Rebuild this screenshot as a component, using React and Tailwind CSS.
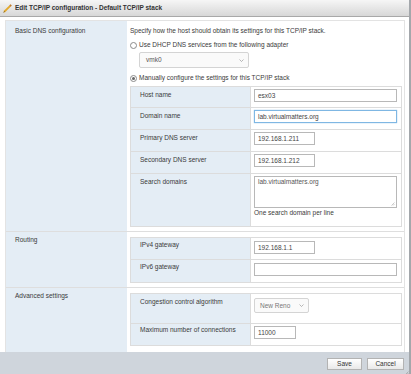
import React from "react";

const Row = ({ label, h, lpt = "pt-[4px]", children }) => (
  <div className={`grid grid-cols-[120px_1fr] border-b border-[#dcdcdc] last:border-b-0 ${h}`}>
    <div className={`bg-[#e4edf5] pl-[9px] ${lpt} border-r border-[#dcdcdc]`}>{label}</div>
    <div className="pl-[3px] pt-[2px]">{children}</div>
  </div>
);

const Input = ({ value, w = "w-[143px]", focus }) => (
  <div
    className={`flex h-[13px] items-center border px-[3px] ${w} ${
      focus ? "border-[#7fb7e3] shadow-[0_0_1px_#7fb7e3]" : "border-[#b8b8b8]"
    } bg-white text-[#444]`}
  >
    {value}
  </div>
);

const Chevron = () => (
  <svg width="5" height="3" viewBox="0 0 5 3" className="text-[#8a8a8a]">
    <path d="M0.5 0.5 L2.5 2.5 L4.5 0.5" fill="none" stroke="currentColor" strokeWidth="0.6" />
  </svg>
);

const Radio = ({ checked }) => (
  <span className="flex h-[7px] w-[7px] items-center justify-center rounded-full border border-[#8a8a8a] bg-white">
    {checked && <span className="h-[3px] w-[3px] rounded-full bg-[#666]" />}
  </span>
);

export default function App() {
  return (
    <div className="flex h-[374px] w-[411px] flex-col overflow-hidden border-r-2 border-[#a3a7ab] bg-white font-['Liberation_Sans',Arial,sans-serif] text-[6.5px] leading-[8px] text-[#3a3a3a]">
      {/* title */}
      <div className="flex h-[17px] shrink-0 items-center gap-[3px] border-b border-[#a8a8a8] bg-gradient-to-b from-[#f6f6f6] to-[#d7d7d7] pl-[3px] font-bold text-[#333]">
        <svg width="9" height="9" viewBox="0 0 9 9">
          <path d="M1 8 L7.2 1.8" stroke="#e3a92b" strokeWidth="1.8" strokeLinecap="butt" />
          <path d="M7 2 L8.2 0.8" stroke="#c0782a" strokeWidth="1.8" />
          <path d="M0.6 8.4 L1.6 7.4" stroke="#6b5a3a" strokeWidth="1" />
        </svg>
        <span>Edit TCP/IP configuration - Default TCP/IP stack</span>
      </div>

      {/* body */}
      <div className="flex-1 pl-[5px] pt-[3px]">
        <div className="w-[400px] border border-b-0 border-[#e3e3e3]">
          {/* DNS */}
          <div className="grid h-[211px] grid-cols-[121px_1fr] border-b border-[#dedede]">
            <div className="bg-[#e4edf5] pl-[9px] pt-[6px]">Basic DNS configuration</div>
            <div className="pl-[3px] pr-[2px] pt-[6px]">
              <div>Specify how the host should obtain its settings for this TCP/IP stack.</div>
              <div className="mt-[6px] flex items-center gap-[2px]">
                <Radio />
                <span>Use DHCP DNS services from the following adapter</span>
              </div>
              <div className="ml-[9px] mt-[3px] flex h-[16px] w-[110px] items-center justify-between rounded-[2px] border border-[#d4d4d4] bg-[#fafafa] pl-[6px] pr-[4px] text-[#555]">
                <span>vmk0</span>
                <Chevron />
              </div>
              <div className="mt-[6px] flex items-center gap-[2px]">
                <Radio checked />
                <span>Manually configure the settings for this TCP/IP stack</span>
              </div>
              <div className="mt-[4px] border border-[#dcdcdc]">
                <Row label="Host name" h="h-[21px]">
                  <Input value="esx03" />
                </Row>
                <Row label="Domain name" h="h-[22px]">
                  <Input value="lab.virtualmatters.org" focus />
                </Row>
                <Row label="Primary DNS server" h="h-[22px]">
                  <Input value="192.168.1.211" w="w-[61px]" />
                </Row>
                <Row label="Secondary DNS server" h="h-[22px]">
                  <Input value="192.168.1.212" w="w-[61px]" />
                </Row>
                <Row label="Search domains" h="h-[52px]">
                  <div className="relative h-[32px] w-[143px] border border-[#b8b8b8] px-[3px] pt-[1px] text-[#555]">
                    lab.virtualmatters.org
                    <svg width="4" height="4" viewBox="0 0 4 4" className="absolute bottom-[1px] right-[1px]">
                      <path d="M0.5 3.5 L3.5 0.5 M2 3.5 L3.5 2" stroke="#999" strokeWidth="0.5" />
                    </svg>
                  </div>
                  <div className="mt-[1px]">One search domain per line</div>
                </Row>
              </div>
            </div>
          </div>

          {/* Routing */}
          <div className="grid h-[56px] grid-cols-[121px_1fr] border-b border-[#dedede]">
            <div className="bg-[#e4edf5] pl-[9px] pt-[4px]">Routing</div>
            <div className="pl-[3px] pr-[2px] pt-[5px]">
              <div className="border border-[#dcdcdc]">
                <Row label="IPv4 gateway" h="h-[22px]" lpt="pt-[3px]">
                  <div className="pt-[1px]">
                    <Input value="192.168.1.1" w="w-[61px]" />
                  </div>
                </Row>
                <Row label="IPv6 gateway" h="h-[22px]" lpt="pt-[3px]">
                  <div className="pt-[1px]">
                    <Input value="" />
                  </div>
                </Row>
              </div>
            </div>
          </div>

          {/* Advanced */}
          <div className="grid h-[64px] grid-cols-[121px_1fr]">
            <div className="bg-[#e4edf5] pl-[9px] pt-[4px]">Advanced settings</div>
            <div className="pl-[3px] pr-[2px] pt-[5px]">
              <div className="border border-[#dcdcdc]">
                <Row label="Congestion control algorithm" h="h-[30px]" lpt="pt-[4px]">
                  <div className="pt-[2px]">
                    <div className="flex h-[15px] w-[55px] items-center justify-between rounded-[2px] border border-[#d4d4d4] bg-[#fafafa] pl-[5px] pr-[4px] text-[#777]">
                      <span>New Reno</span>
                      <Chevron />
                    </div>
                  </div>
                </Row>
                <Row label="Maximum number of connections" h="h-[21px]" lpt="pt-[2px]">
                  <Input value="11000" w="w-[42px]" />
                </Row>
              </div>
            </div>
          </div>
        </div>
      </div>

      {/* footer */}
      <div className="relative flex h-[23px] shrink-0 items-center justify-end gap-[5px] bg-[#cfd5dc] pr-[5px]">
        <button className="h-[12px] w-[35px] border border-[#b3b3b3] bg-gradient-to-b from-white to-[#e9e9e9] text-[6.5px] text-[#333]">
          Save
        </button>
        <button className="h-[12px] w-[37px] border border-[#b3b3b3] bg-gradient-to-b from-white to-[#e9e9e9] text-[6.5px] text-[#333]">
          Cancel
        </button>
        <svg width="4" height="4" viewBox="0 0 4 4" className="absolute bottom-0 right-0">
          <path d="M0.5 3.5 L3.5 0.5 M2 3.5 L3.5 2" stroke="#888" strokeWidth="0.5" />
        </svg>
      </div>
    </div>
  );
}
